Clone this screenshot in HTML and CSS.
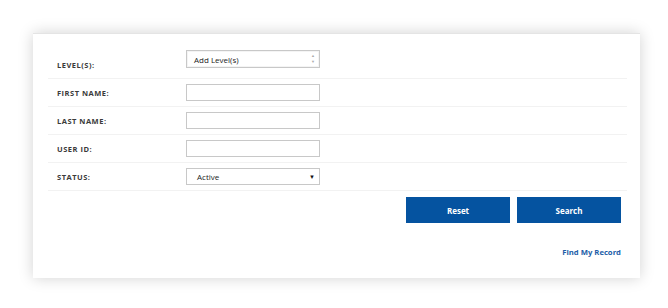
FILE: index.html
```html
<!DOCTYPE html>
<html lang="en">
<head>
    <meta charset="UTF-8">
    <meta name="viewport" content="width=device-width, initial-scale=1.0">
    <title>Record Search</title>
    <link rel="stylesheet" href="styles.css">
</head>
<body>
    <div class="card">
        <div class="row">
            <label>Level(s):</label>
            <div class="field spin">
                <span>Add Level(s)</span>
                <span class="arrows"><i>&#9650;</i><i>&#9660;</i></span>
            </div>
        </div>
        <div class="row">
            <label>First Name:</label>
            <input type="text">
        </div>
        <div class="row">
            <label>Last Name:</label>
            <input type="text">
        </div>
        <div class="row">
            <label>User ID:</label>
            <input type="text">
        </div>
        <div class="row">
            <label>Status:</label>
            <div class="field select">
                <span>Active</span>
                <span class="caret">&#9660;</span>
            </div>
        </div>

        <div class="actions">
            <button>Reset</button>
            <button>Search</button>
        </div>
        <div class="links">
            <a href="#">Find My Record</a>
        </div>
    </div>
</body>
</html>
```

FILE: styles.css
```css
body {
    margin: 0;
    padding: 33px 28px 30px 33px;
    background: #fff;
    font-family: "Open Sans", Arial, sans-serif;
    color: #333;
}
.card {
    width: 607px;
    height: 245px;
    box-sizing: border-box;
    padding: 17px 13px 0 15px;
    background: #fff;
    box-shadow: 0 0 14px rgba(0, 0, 0, 0.18);
    border-top: 1px solid #e4e4e4;
}
.row {
    display: grid;
    grid-template-columns: 129px 134px;
    align-items: center;
    height: 28px;
    box-sizing: border-box;
    padding-left: 9px;
    border-bottom: 1px solid #f2f2f2;
}
.row label {
    font-size: 7.5px;
    font-weight: 700;
    letter-spacing: 0.5px;
    text-transform: uppercase;
    color: #3a3a3a;
}
.row input,
.field {
    width: 134px;
    height: 17px;
    box-sizing: border-box;
    margin: 0;
    border: 1px solid #c8c8c8;
    background: #fff;
}
.field {
    display: flex;
    align-items: center;
    justify-content: space-between;
    padding: 0 4px 0 7px;
    font-size: 8px;
    color: #222;
}
.spin {
    align-self: start;
    height: 18px;
    margin-top: -1px;
    box-shadow: inset 0 0 0 1px #f4f4f4;
}
.arrows {
    display: flex;
    flex-direction: column;
    font-size: 4px;
    line-height: 6px;
    color: #aaa;
}
.arrows i { font-style: normal; }
.select {
    padding-left: 10px;
}
.caret {
    font-size: 6px;
    color: #111;
}
.actions {
    display: flex;
    justify-content: flex-end;
    gap: 7px;
    margin-top: 6px;
    padding-right: 6px;
}
.actions button {
    width: 104px;
    height: 26px;
    border: none;
    background: #0553a0;
    color: #fff;
    font-family: "Open Sans", Arial, sans-serif;
    font-size: 8px;
    font-weight: 700;
}
.links {
    display: flex;
    justify-content: flex-end;
    margin-top: 24px;
    padding-right: 6px;
}
.links a {
    font-size: 7.7px;
    font-weight: 700;
    color: #1d5ea8;
    text-decoration: none;
}
```
